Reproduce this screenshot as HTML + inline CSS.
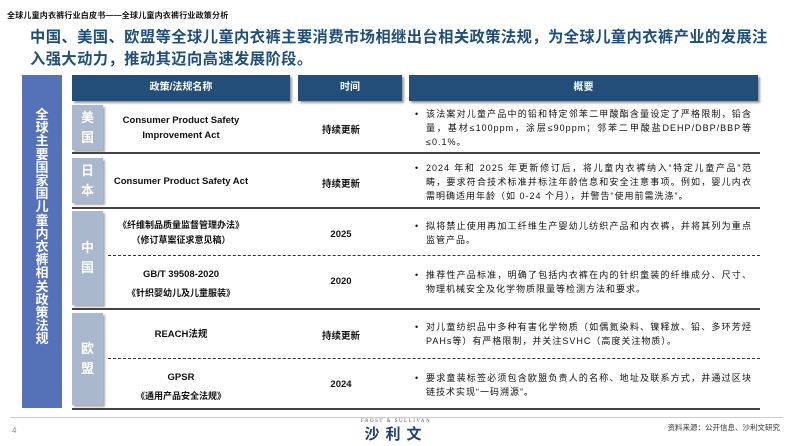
<!DOCTYPE html>
<html><head><meta charset="utf-8"><style>
*{margin:0;padding:0;box-sizing:border-box}
body{width:793px;height:446px;background:#fff;position:relative;overflow:hidden;font-family:"Liberation Sans","Noto Sans CJK SC",sans-serif;color:#111}
.a{position:absolute}
.hd{background:#234e79;color:#fff;font-weight:bold;font-size:10px;text-align:center;line-height:26px;box-shadow:2px 2px 2px #999;top:75px;height:26px}
.cb{background:#a9b8cc;color:#fff;font-size:13px;font-weight:bold;left:72px;width:31px;display:flex;flex-direction:column;align-items:center;justify-content:center;line-height:20px;box-shadow:2px 2px 2px #aaa}
.sl{height:2px;background:#444;left:72px;width:688px}
.dl{border-top:1.5px dashed #333;left:108px;width:652px;height:0}
.nm{left:110px;width:142px;text-align:center;font-size:9.5px;font-weight:bold;line-height:15px}
.tm{left:300px;width:82px;text-align:center;font-size:9.5px;font-weight:bold}
.sm{left:414px;width:338px;font-size:9px;line-height:14px;padding-left:12px;letter-spacing:1px;text-align:justify}
.sm:before{content:"•";position:absolute;left:1px}
</style></head><body>
<div class="a" style="left:7px;top:10px;font-size:8px;font-weight:bold;letter-spacing:0.2px">全球儿童内衣裤行业白皮书——全球儿童内衣裤行业政策分析</div>
<div class="a" style="left:30px;top:27px;width:770px;font-size:15.3px;font-weight:bold;color:#1f4e79;line-height:22px;letter-spacing:0.4px;white-space:nowrap">中国、美国、欧盟等全球儿童内衣裤主要消费市场相继出台相关政策法规，为全球儿童内衣裤产业的发展注<br>入强大动力，推动其迈向高速发展阶段。</div>
<div class="a" style="left:22px;top:75px;width:40px;height:333px;background:#5572b8;color:#fff;font-size:13px;font-weight:bold;line-height:13.2px;text-align:center;padding-top:33px">全<br>球<br>主<br>要<br>国<br>家<br>国<br>儿<br>童<br>内<br>衣<br>裤<br>相<br>关<br>政<br>策<br>法<br>规</div>
<div class="a hd" style="left:72px;width:218px">政策/法规名称</div>
<div class="a hd" style="left:298px;width:104px">时间</div>
<div class="a hd" style="left:409px;width:349px">概要</div>

<div class="a cb" style="top:105px;height:45px">美<br>国</div>
<div class="a cb" style="top:158px;height:45px">日<br>本</div>
<div class="a cb" style="top:211px;height:94px">中<br>国</div>
<div class="a cb" style="top:313px;height:92px">欧<br>盟</div>

<div class="a sl" style="top:152px"></div>
<div class="a sl" style="top:207px"></div>
<div class="a dl" style="top:255px"></div>
<div class="a sl" style="top:308px"></div>
<div class="a dl" style="top:358px"></div>
<div class="a sl" style="top:408px"></div>

<div class="a nm" style="top:113px;left:100px;width:162px">Consumer Product Safety<br>Improvement Act</div>
<div class="a tm" style="top:122px">持续更新</div>
<div class="a sm" style="top:107px">该法案对儿童产品中的铅和特定邻苯二甲酸酯含量设定了严格限制，铅含量，基材≤100ppm，涂层≤90ppm；邻苯二甲酸盐DEHP/DBP/BBP等≤0.1%。</div>

<div class="a nm" style="top:174px;left:100px;width:162px">Consumer Product Safety Act</div>
<div class="a tm" style="top:176px">持续更新</div>
<div class="a sm" style="top:161px">2024 年和 2025 年更新修订后，将儿童内衣裤纳入“特定儿童产品”范畴，要求符合技术标准并标注年龄信息和安全注意事项。例如，婴儿内衣需明确适用年龄（如 0-24 个月），并警告“使用前需洗涤”。</div>

<div class="a nm" style="top:218px;left:100px;width:162px;font-size:9px">《纤维制品质量监督管理办法》<br>（修订草案征求意见稿）</div>
<div class="a tm" style="top:229px">2025</div>
<div class="a sm" style="top:219px">拟将禁止使用再加工纤维生产婴幼儿纺织产品和内衣裤，并将其列为重点监管产品。</div>

<div class="a nm" style="top:266px;left:100px;width:162px;line-height:18px">GB/T 39508-2020<br><span style="font-size:9px">《针织婴幼儿及儿童服装》</span></div>
<div class="a tm" style="top:276px">2020</div>
<div class="a sm" style="top:268px">推荐性产品标准，明确了包括内衣裤在内的针织童装的纤维成分、尺寸、物理机械安全及化学物质限量等检测方法和要求。</div>

<div class="a nm" style="top:327px">REACH法规</div>
<div class="a tm" style="top:328px">持续更新</div>
<div class="a sm" style="top:320px">对儿童纺织品中多种有害化学物质（如偶氮染料、镍释放、铅、多环芳烃PAHs等）有严格限制，并关注SVHC（高度关注物质）。</div>

<div class="a nm" style="top:368px;line-height:19px">GPSR<br><span style="font-size:9px">《通用产品安全法规》</span></div>
<div class="a tm" style="top:379px">2024</div>
<div class="a sm" style="top:371px">要求童装标签必须包含欧盟负责人的名称、地址及联系方式，并通过区块链技术实现“一码溯源”。</div>

<div class="a" style="left:10px;top:417px;width:773px;height:1px;background:#ccc"></div>
<div class="a" style="left:12px;top:426px;font-size:8px;color:#888">4</div>
<div class="a" style="left:340px;top:419px;width:112px;text-align:center;font-family:'Liberation Serif',serif;font-size:5px;letter-spacing:1.5px;color:#555">FROST &amp; SULLIVAN</div>
<div class="a" style="left:340px;top:426px;width:112px;text-align:center;font-size:15px;font-weight:bold;color:#1f3f6e;letter-spacing:6px;line-height:18px">沙利文</div>
<div class="a" style="left:640px;top:422px;width:140px;text-align:right;font-size:7.5px;color:#333">资料来源：公开信息、沙利文研究</div>
</body></html>
